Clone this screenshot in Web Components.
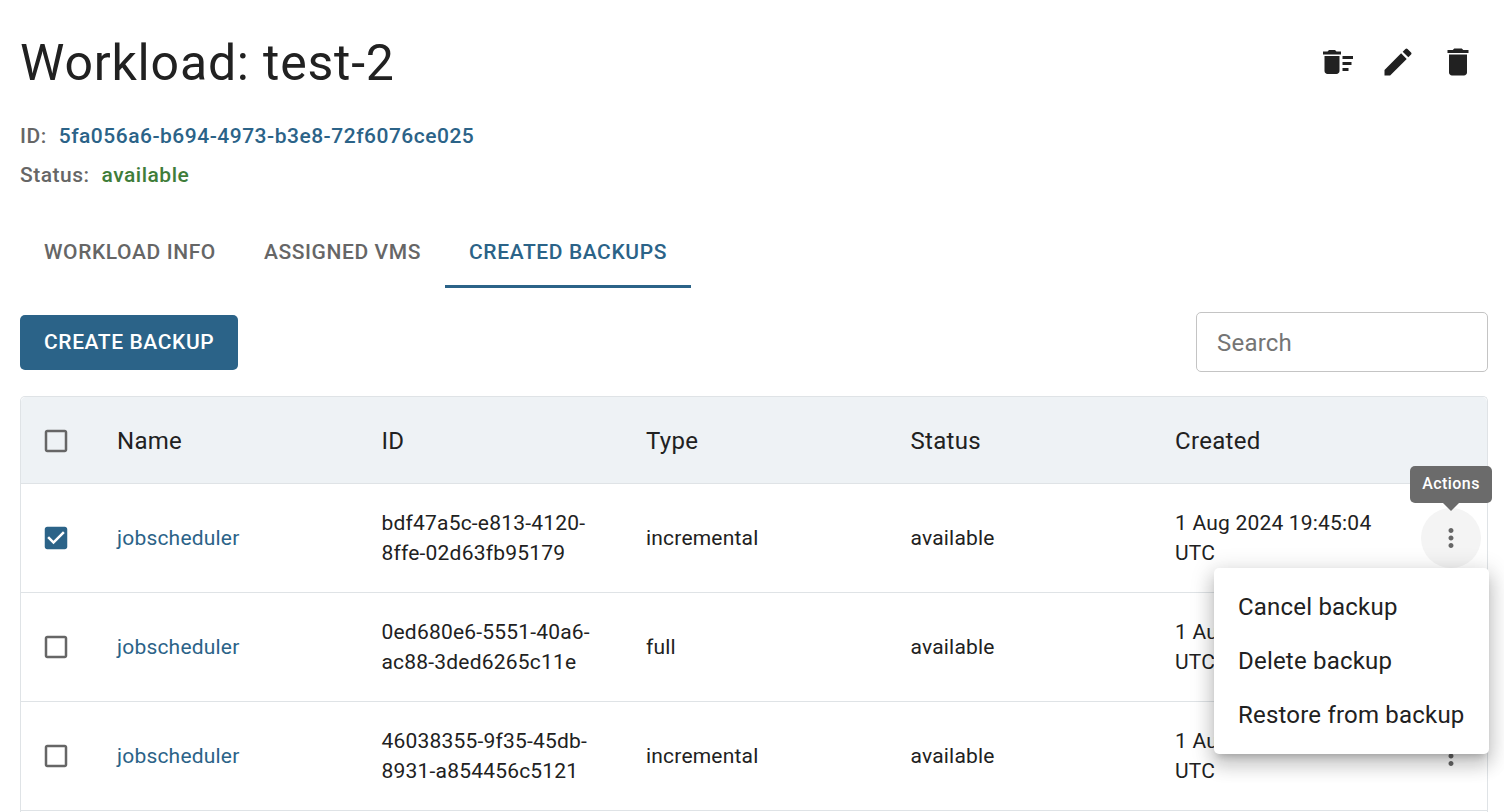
<!DOCTYPE html>
<html lang="en">
<head>
<meta charset="utf-8">
<title>Workload: test-2</title>
<style>
  html, body { margin: 0; height: 100%; overflow: hidden; background: #fff; }
  body { font-family: Roboto, "Liberation Sans", sans-serif; color: #212121; }
</style>
</head>
<body>
<workload-page>
  <workload-header slot="header" name="test-2" uuid="5fa056a6-b694-4973-b3e8-72f6076ce025" status="available"></workload-header>
  <workload-tabs slot="tabs"></workload-tabs>
  <backup-toolbar slot="toolbar"></backup-toolbar>
  <backup-table slot="table">
    <backup-row name="jobscheduler" uuid="bdf47a5c-e813-4120-8ffe-02d63fb95179" type="incremental" status="available" created="1 Aug 2024 19:45:04 UTC" checked open></backup-row>
    <backup-row name="jobscheduler" uuid="0ed680e6-5551-40a6-ac88-3ded6265c11e" type="full" status="available" created="1 Aug 2024 19:45:04 UTC"></backup-row>
    <backup-row name="jobscheduler" uuid="46038355-9f35-45db-8931-a854456c5121" type="incremental" status="available" created="1 Aug 2024 19:45:04 UTC"></backup-row>
  </backup-table>
</workload-page>

<script>
const ICONS = {
  sweep: 'M15 16h4v2h-4zm0-8h7v2h-7zm0 4h6v2h-6zM3 18c0 1.1.9 2 2 2h6c1.1 0 2-.9 2-2V8H3v10zM14 5h-3l-1-1H6L5 5H2v2h12z',
  edit: 'M3 17.25V21h3.75L17.81 9.94l-3.75-3.75L3 17.25zM20.71 7.04c.39-.39.39-1.02 0-1.41l-2.34-2.34a.9959.9959 0 0 0-1.41 0l-1.83 1.83 3.75 3.75 1.83-1.83z',
  del: 'M6 19c0 1.1.9 2 2 2h8c1.1 0 2-.9 2-2V7H6v12zM19 4h-3.5l-1-1h-5l-1 1H5v2h14V4z',
  box: 'M19 5v14H5V5h14m0-2H5c-1.1 0-2 .9-2 2v14c0 1.1.9 2 2 2h14c1.1 0 2-.9 2-2V5c0-1.1-.9-2-2-2z',
  boxChecked: 'M19 3H5c-1.11 0-2 .9-2 2v14c0 1.1.89 2 2 2h14c1.11 0 2-.9 2-2V5c0-1.1-.89-2-2-2zm-9 14l-5-5 1.41-1.41L10 14.17l7.59-7.59L19 8l-9 9z',
  more: 'M12 8c1.1 0 2-.9 2-2s-.9-2-2-2-2 .9-2 2 .9 2 2 2zm0 2c-1.1 0-2 .9-2 2s.9 2 2 2 2-.9 2-2-.9-2-2-2zm0 6c-1.1 0-2 .9-2 2s.9 2 2 2 2-.9 2-2-.9-2-2-2z'
};

const icon = (name, color, size = 30) =>
  `<svg width="${size}" height="${size}" viewBox="0 0 24 24" fill="${color}" style="display:block"><path d="${ICONS[name]}"/></svg>`;

const COLUMNS = '96px repeat(4, 264.5px) 246px 1fr';

class WorkloadPage extends HTMLElement {
  constructor() {
    super();
    this.attachShadow({ mode: 'open' });
    this.shadowRoot.innerHTML = `
      <style>
        :host { display: flex; flex-direction: column; height: 100vh; box-sizing: border-box; padding: 0 16px 0 20px; }
        ::slotted(backup-table) { flex: 1; }
      </style>
      <slot name="header"></slot>
      <slot name="tabs"></slot>
      <slot name="toolbar"></slot>
      <slot name="table"></slot>`;
  }
}

class WorkloadHeader extends HTMLElement {
  constructor() {
    super();
    this.attachShadow({ mode: 'open' });
  }

  connectedCallback() {
    this.shadowRoot.innerHTML = `
      <style>
        :host { display: block; }
        .top { display: flex; justify-content: space-between; align-items: center; height: 108px; padding-top: 8px; }
        h1 { margin: 2px 0 0; font-size: 50px; font-weight: 400; line-height: 60px; letter-spacing: .8px; color: #212121; }
        .actions { display: flex; }
        .actions span { width: 60px; height: 60px; display: flex; align-items: center; justify-content: center; }
        .meta { height: 39px; display: flex; align-items: center; font-size: 21px; font-weight: 500; letter-spacing: .5px; color: #666; }
        .meta:first-of-type { padding-bottom: 2px; box-sizing: border-box; }
        .meta b { font-weight: 500; margin-left: 12px; }
        .id { color: #2b6388; }
        .ok { color: #3f7d3a; }
      </style>
      <div class="top">
        <h1>Workload: ${this.getAttribute('name')}</h1>
        <div class="actions">
          <span>${icon('sweep', '#212121', 36)}</span>
          <span>${icon('edit', '#212121', 36)}</span>
          <span>${icon('del', '#212121', 36)}</span>
        </div>
      </div>
      <div class="meta">ID:<b class="id">${this.getAttribute('uuid')}</b></div>
      <div class="meta">Status:<b class="ok">${this.getAttribute('status')}</b></div>`;
  }
}

class WorkloadTabs extends HTMLElement {
  constructor() {
    super();
    this.attachShadow({ mode: 'open' });
    this.shadowRoot.innerHTML = `
      <style>
        :host { display: flex; margin-top: 22px; }
        div { box-sizing: border-box; height: 72px; padding: 3px 24px 0; display: flex; align-items: center; font-size: 21px; font-weight: 500; letter-spacing: .6px; color: #666; border-bottom: 3px solid transparent; }
        .on { color: #2b6388; border-bottom-color: #2b6388; }
      </style>
      <div>WORKLOAD INFO</div>
      <div>ASSIGNED VMS</div>
      <div class="on">CREATED BACKUPS</div>`;
  }
}

class BackupToolbar extends HTMLElement {
  constructor() {
    super();
    this.attachShadow({ mode: 'open' });
    this.shadowRoot.innerHTML = `
      <style>
        :host { display: flex; justify-content: space-between; align-items: center; margin: 24px 0; height: 60px; }
        button { all: unset; box-sizing: border-box; height: 55px; padding: 0 24px; display: flex; align-items: center; background: #2b6388; color: #fff; border-radius: 5px; font: 500 21px Roboto, sans-serif; letter-spacing: .6px; }
        .search { box-sizing: border-box; width: 292px; height: 60px; border: 1px solid #c4c4c4; border-radius: 5px; padding: 2px 20px 0; display: flex; align-items: center; font-size: 24px; letter-spacing: .2px; color: #757575; }
      </style>
      <button>CREATE BACKUP</button>
      <div class="search">Search</div>`;
  }
}

class BackupTable extends HTMLElement {
  constructor() {
    super();
    this.attachShadow({ mode: 'open' });
    this.shadowRoot.innerHTML = `
      <style>
        :host { display: block; border: 1px solid #dfe3e6; border-bottom: 0; border-radius: 5px 5px 0 0; }
        .head { display: grid; grid-template-columns: ${COLUMNS}; box-sizing: border-box; height: 87px; padding-top: 2px; align-items: center; background: #eef2f5; border-bottom: 1px solid #dfe3e6; border-radius: 5px 5px 0 0; font-size: 24px; letter-spacing: .3px; color: #212121; }
        .check { padding-left: 20px; }
      </style>
      <div class="head">
        <div class="check">${icon('box', '#666')}</div>
        <div>Name</div><div>ID</div><div>Type</div><div>Status</div><div>Created</div><div></div>
      </div>
      <slot></slot>`;
  }
}

class BackupRow extends HTMLElement {
  constructor() {
    super();
    this.attachShadow({ mode: 'open' });
  }

  connectedCallback() {
    const open = this.hasAttribute('open');
    this.shadowRoot.innerHTML = `
      <style>
        :host { display: grid; grid-template-columns: ${COLUMNS}; box-sizing: border-box; height: 109px; align-items: center; border-bottom: 1px solid #dfe3e6; font-size: 21px; line-height: 30px; letter-spacing: .2px; color: #212121; }
        .check { padding-left: 20px; }
        .link { color: #2b6388; }
        .id, .created { padding-right: 24px; }
      </style>
      <div class="check">${this.hasAttribute('checked') ? icon('boxChecked', '#2b6388') : icon('box', '#666')}</div>
      <div class="link">${this.getAttribute('name')}</div>
      <div class="id">${this.getAttribute('uuid')}</div>
      <div>${this.getAttribute('type')}</div>
      <div>${this.getAttribute('status')}</div>
      <div class="created">${this.getAttribute('created')}</div>
      <row-actions ${open ? 'open' : ''}></row-actions>`;
  }
}

class RowActions extends HTMLElement {
  constructor() {
    super();
    this.attachShadow({ mode: 'open' });
  }

  connectedCallback() {
    const open = this.hasAttribute('open');
    this.shadowRoot.innerHTML = `
      <style>
        :host { display: block; position: relative; width: 60px; height: 60px; ${open ? 'z-index: 10;' : ''} }
        .btn { width: 60px; height: 60px; border-radius: 50%; display: flex; align-items: center; justify-content: center; ${open ? 'background: #f4f4f4;' : ''} }
        .tip { position: absolute; left: -11px; top: -42px; width: 82px; height: 37px; box-sizing: border-box; padding-bottom: 2px; background: #6b6b6b; color: #fff; border-radius: 5px; display: flex; align-items: center; justify-content: center; font-size: 16px; font-weight: 500; letter-spacing: .45px; line-height: 20px; }
        .tip::after { content: ""; position: absolute; left: 33px; bottom: -8px; border: 8px solid transparent; border-bottom: 0; border-top-color: #6b6b6b; }
        .menu { position: absolute; left: -207px; top: 60px; width: 275px; box-sizing: border-box; padding: 12px 0; background: #fff; border-radius: 5px; box-shadow: 0 6px 7px -4px rgba(0,0,0,.2), 0 11px 18px 2px rgba(0,0,0,.14), 0 4px 22px 4px rgba(0,0,0,.12); font-size: 24px; letter-spacing: .2px; color: #212121; }
        .menu div { height: 54px; padding-left: 24px; display: flex; align-items: center; white-space: nowrap; }
      </style>
      <div class="btn">${icon('more', '#666')}</div>
      ${open ? `<div class="tip">Actions</div>
      <div class="menu"><div>Cancel backup</div><div>Delete backup</div><div>Restore from backup</div></div>` : ''}`;
  }
}

customElements.define('workload-page', WorkloadPage);
customElements.define('workload-header', WorkloadHeader);
customElements.define('workload-tabs', WorkloadTabs);
customElements.define('backup-toolbar', BackupToolbar);
customElements.define('backup-table', BackupTable);
customElements.define('row-actions', RowActions);
customElements.define('backup-row', BackupRow);
</script>
</body>
</html>
